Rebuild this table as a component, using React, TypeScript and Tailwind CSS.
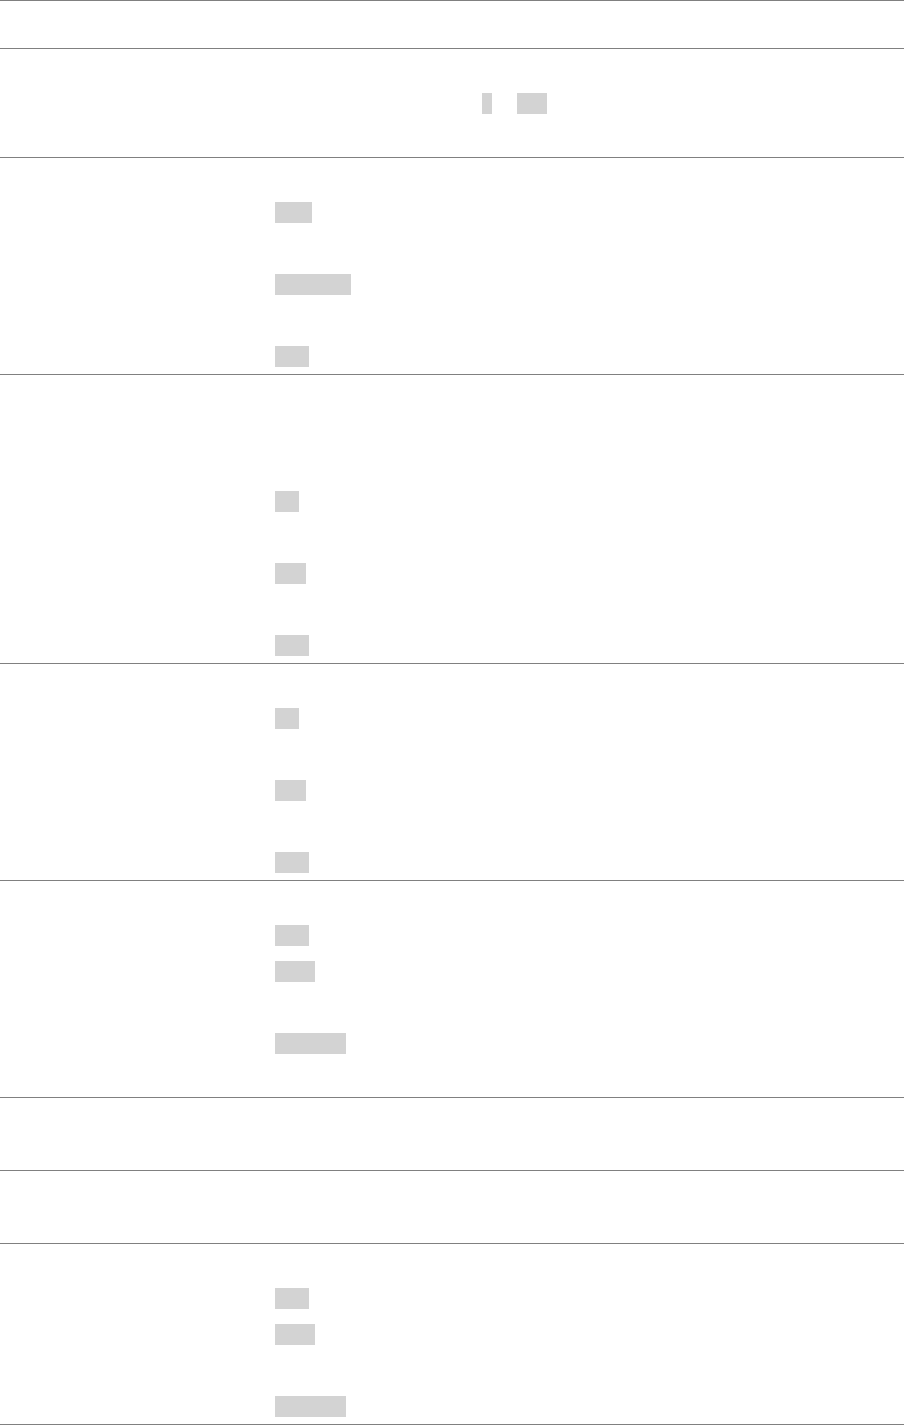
import React from 'react';

type Key = { label: string; w: string; ml?: string };
type Line = { text?: string; keys?: Key[]; indent?: string };
type Row = { title: string; lines: Line[] };

// text in this table is drawn in the page colour, only the key chips show
const rows: Row[] = [
  {
    title: 'Close',
    lines: [
      {},
      {
        indent: 'pl-[207px]',
        keys: [
          { label: 'q', w: 'w-[10px]' },
          { label: 'Esc', w: 'w-[30px]', ml: 'ml-[25px]' },
        ],
      },
      {},
    ],
  },
  {
    title: 'Move',
    lines: [
      { text: 'Next item' },
      { keys: [{ label: 'Tab', w: 'w-[37px]' }] },
      { text: 'Previous item' },
      { keys: [{ label: 'Shift+Tab', w: 'w-[76px]' }] },
      { text: 'Open' },
      { keys: [{ label: 'Enter', w: 'w-[34px]' }] },
    ],
  },
  {
    title: 'Scroll',
    lines: [
      { text: 'Scroll the list' },
      { text: 'by one line or by one page' },
      { text: 'Up' },
      { keys: [{ label: 'Up', w: 'w-[24px]' }] },
      { text: 'Down' },
      { keys: [{ label: 'Down', w: 'w-[31px]' }] },
      { text: 'Page' },
      { keys: [{ label: 'Space', w: 'w-[34px]' }] },
    ],
  },
  {
    title: 'Select',
    lines: [
      { text: 'First' },
      { keys: [{ label: 'Up', w: 'w-[24px]' }] },
      { text: 'Last' },
      { keys: [{ label: 'Down', w: 'w-[31px]' }] },
      { text: 'Toggle' },
      { keys: [{ label: 'Space', w: 'w-[34px]' }] },
    ],
  },
  {
    title: 'Zoom',
    lines: [
      { text: 'Zoom in' },
      { keys: [{ label: 'Ctrl', w: 'w-[34px]' }] },
      { keys: [{ label: 'Ctrl +', w: 'w-[40px]' }] },
      { text: 'Reset zoom' },
      { keys: [{ label: 'Ctrl+0', w: 'w-[71px]' }] },
      {},
    ],
  },
  { title: 'Print', lines: [{ text: 'Print the page' }, {}] },
  { title: 'Save', lines: [{ text: 'Save the page' }, {}] },
  {
    title: 'Find',
    lines: [
      { text: 'Find in page' },
      { keys: [{ label: 'Ctrl', w: 'w-[34px]' }] },
      { keys: [{ label: 'Ctrl F', w: 'w-[40px]' }] },
      { text: 'Find next' },
      { keys: [{ label: 'Ctrl+G', w: 'w-[71px]' }] },
    ],
  },
];

function KeyChip({ k }: { k: Key }) {
  return (
    <code
      className={`inline-block h-[21px] overflow-hidden bg-[#d3d3d3] text-[11px] leading-[21px] text-transparent ${k.w} ${k.ml ?? ''}`}
    >
      {k.label}
    </code>
  );
}

export default function App() {
  return (
    <div className="min-h-[1425px] bg-white font-['Liberation_Sans',Arial,sans-serif]">
      <div className="w-[904px] border-t border-[#808080]">
        <div className="grid h-[48px] grid-cols-[275px_1fr] items-center border-b border-[#808080] text-white">
          <div className="text-[16px] font-bold">Action</div>
          <div className="text-[16px] font-bold">Keys</div>
        </div>
        {rows.map((row) => (
          <div
            key={row.title}
            className="grid grid-cols-[275px_1fr] border-b border-[#808080]"
          >
            <div className="flex h-9 items-center text-[16px] text-white">{row.title}</div>
            <div className="flex flex-col">
              {row.lines.map((line, i) => (
                <div key={i} className={`flex h-9 items-start pt-2 ${line.indent ?? ''}`}>
                  {line.keys
                    ? line.keys.map((k) => <KeyChip key={k.label} k={k} />)
                    : <span className="text-[16px] leading-[21px] text-white">{line.text}</span>}
                </div>
              ))}
            </div>
          </div>
        ))}
      </div>
    </div>
  );
}
